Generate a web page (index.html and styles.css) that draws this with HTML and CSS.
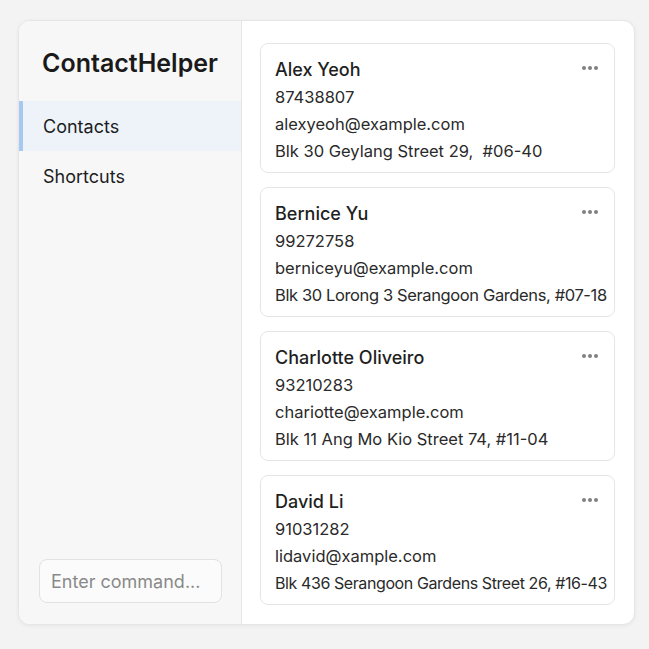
FILE: index.html
```html
<!DOCTYPE html>
<html>
<head>
<meta charset="utf-8">
<link rel="stylesheet" href="styles.css">
</head>
<body>
<div class="app">
  <aside class="sidebar">
    <h1 class="brand">ContactHelper</h1>
    <nav class="nav">
      <div class="nav-item active">Contacts</div>
      <div class="nav-item">Shortcuts</div>
    </nav>
    <div class="command">
      <input class="command-input" type="text" placeholder="Enter command...">
    </div>
  </aside>
  <main class="list">
    <div class="card">
      <div class="card-head"><span class="name">Alex Yeoh</span><span class="more"><i></i><i></i><i></i></span></div>
      <div class="line">87438807</div>
      <div class="line">alexyeoh@example.com</div>
      <div class="line">Blk 30 Geylang Street 29,&nbsp; #06-40</div>
    </div>
    <div class="card">
      <div class="card-head"><span class="name">Bernice Yu</span><span class="more"><i></i><i></i><i></i></span></div>
      <div class="line">99272758</div>
      <div class="line">berniceyu@example.com</div>
      <div class="line tight">Blk 30 Lorong 3 Serangoon Gardens, #07-18</div>
    </div>
    <div class="card">
      <div class="card-head"><span class="name">Charlotte Oliveiro</span><span class="more"><i></i><i></i><i></i></span></div>
      <div class="line">93210283</div>
      <div class="line">chariotte@example.com</div>
      <div class="line">Blk 11 Ang Mo Kio Street 74, #11-04</div>
    </div>
    <div class="card">
      <div class="card-head"><span class="name">David Li</span><span class="more"><i></i><i></i><i></i></span></div>
      <div class="line">91031282</div>
      <div class="line">lidavid@xample.com</div>
      <div class="line tighter">Blk 436 Serangoon Gardens Street 26, #16-43</div>
    </div>
  </main>
</div>
</body>
</html>
```
FILE: styles.css
```css
* { box-sizing: border-box; }
html, body { margin: 0; height: 100%; }
body {
  background: #f3f3f3;
  font-family: Inter, "Noto Sans", sans-serif;
  color: #1d1d1f;
  padding: 20px 14px 25px 18px;
}
.app {
  width: 617px;
  height: 605px;
  display: flex;
  background: #fff;
  border: 1px solid #e6e6e6;
  border-radius: 12px;
  box-shadow: 0 1px 4px rgba(0,0,0,0.06);
  overflow: hidden;
}
.sidebar {
  width: 223px;
  flex: none;
  background: #f7f7f7;
  border-right: 1px solid #e6e6e6;
  display: flex;
  flex-direction: column;
  padding: 28px 0 21px 0;
}
.brand {
  margin: 0 0 24px 23px;
  font-size: 25px;
  font-weight: 600;
  line-height: 28px;
  color: #1a1a1a;
}
.nav { flex: 1; }
.nav-item {
  height: 50px;
  display: flex;
  align-items: center;
  padding-left: 24px;
  font-size: 18px;
  color: #1d1d1f;
}
.nav-item.active {
  background: #edf3f9;
  border-left: 4px solid #a6c9ef;
  padding-left: 20px;
}
.command { padding: 0 19px 0 20px; }
.command-input {
  width: 100%;
  height: 44px;
  border: 1px solid #e2e2e2;
  border-radius: 8px;
  background: #fbfbfb;
  padding: 0 11px;
  font-family: Inter, "Noto Sans", sans-serif;
  font-size: 18px;
  color: #333;
  outline: none;
}
.command-input::placeholder { color: #8a8a8a; }
.list {
  flex: 1;
  min-width: 0;
  padding: 22px 19px 0 18px;
  display: flex;
  flex-direction: column;
  gap: 14px;
}
.card {
  height: 130px;
  min-width: 0;
  overflow: hidden;
  border: 1px solid #e5e5e5;
  border-radius: 8px;
  padding: 12px 14px 0 14px;
  background: #fff;
}
.card-head {
  display: flex;
  justify-content: space-between;
  align-items: center;
  height: 26px;
  margin-bottom: 2px;
}
.name {
  font-size: 18px;
  font-weight: 550;
  color: #1f1f1f;
}
.more {
  display: flex;
  gap: 2px;
  margin-right: 2px;
  margin-top: -2px;
}
.more i {
  width: 4px;
  height: 4px;
  border-radius: 50%;
  background: #808080;
}
.line {
  font-size: 16.5px;
  line-height: 27px;
  color: #2a2a2a;
  white-space: nowrap;
}
.line.tight { letter-spacing: -0.38px; }
.line.tighter { font-size: 16px; letter-spacing: -0.41px; }
```
